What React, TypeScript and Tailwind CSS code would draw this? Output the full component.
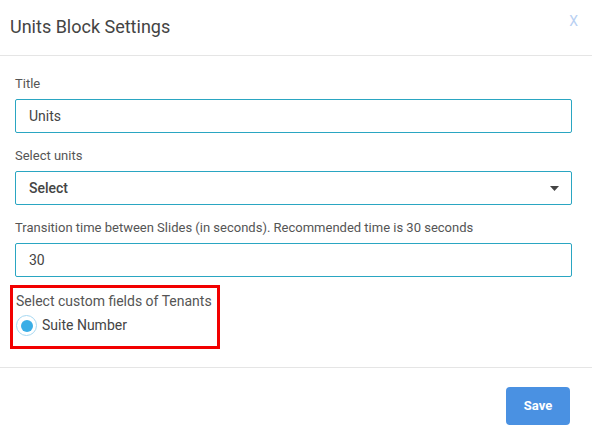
import React from "react";

const Field = (props: { label: string; children: React.ReactNode; className?: string }) => {
  const { label, children, className } = props;
  return (
    <div className={className}>
      <div className="text-[13px] leading-[18px] text-[#555]">{label}</div>
      <div className="mt-[6px]">{children}</div>
    </div>
  );
};

const App = () => {
  return (
    <div
      className="w-[592px] h-[444px] bg-white flex flex-col"
      style={{ fontFamily: "Roboto, 'Liberation Sans', sans-serif" }}
    >
      <div className="h-[56px] shrink-0 flex items-center justify-between pl-[10px] pr-[14px] border-b border-[#e5e5e5]">
        <div className="text-[18px] text-[#444] pb-[2px]">Units Block Settings</div>
        <div className="text-[14px] text-[#b9d0f2] mb-[12px]">X</div>
      </div>

      <div className="flex-1 pl-[15px] pr-[20px] pt-[19px] flex flex-col">
        <Field label="Title">
          <div className="h-[34px] border border-[#2aa6c2] rounded-[2px] flex items-center px-[13px] text-[14px] text-[#444]">
            Units
          </div>
        </Field>

        <Field label="Select units" className="mt-[14px]">
          <div className="h-[34px] border border-[#2aa6c2] rounded-[2px] flex items-center justify-between pl-[13px] pr-[12px] text-[14px] font-medium text-[#444]">
            <span>Select</span>
            <svg width="9" height="5" viewBox="0 0 9 5">
              <path d="M0 0 L9 0 L4.5 5 Z" fill="#444" />
            </svg>
          </div>
        </Field>

        <Field label="Transition time between Slides (in seconds). Recommended time is 30 seconds" className="mt-[14px]">
          <div className="h-[34px] border border-[#2aa6c2] rounded-[2px] flex items-center px-[13px] text-[14px] text-[#444]">
            30
          </div>
        </Field>

        <div className="mt-[8px] -ml-[5px] w-[210px] h-[64px] border-[3px] border-[#f20000] pl-[3px] pt-[4px]">
          <div className="text-[14px] leading-[18px] text-[#555]">Select custom fields of Tenants</div>
          <label className="mt-[5px] flex items-center gap-[5px]">
            <span className="w-[21px] h-[21px] rounded-full border-[1.5px] border-[#a6d8f2] flex items-center justify-center">
              <span className="w-[12px] h-[12px] rounded-full bg-[#3aaee6]" />
            </span>
            <span className="text-[14px] text-[#444]">Suite Number</span>
          </label>
        </div>
      </div>

      <div className="h-[77px] shrink-0 border-t border-[#e5e5e5] flex items-start justify-end pr-[22px] pt-[19px]">
        <button className="w-[64px] h-[38px] rounded-[4px] bg-[#4a91e2] text-white text-[13px] font-bold">
          Save
        </button>
      </div>
    </div>
  );
};

export default App;
